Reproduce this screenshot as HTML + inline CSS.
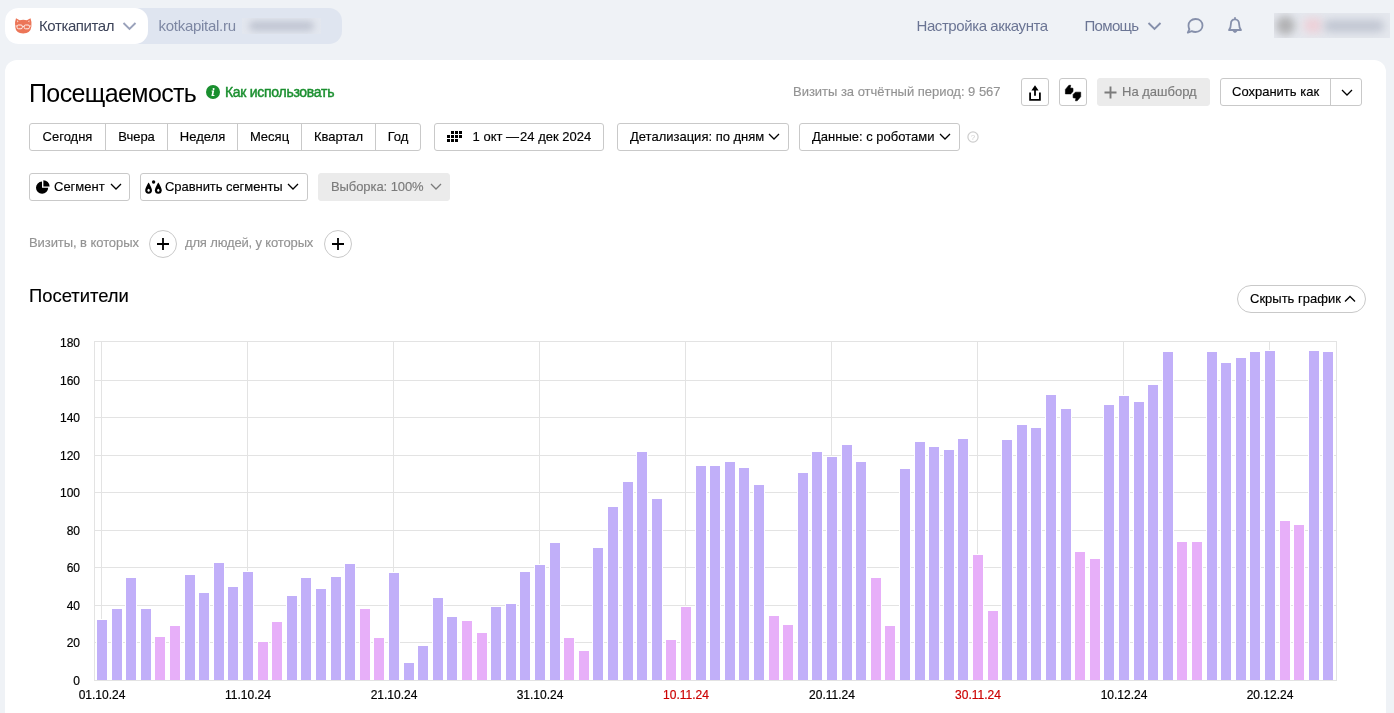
<!DOCTYPE html>
<html lang="ru">
<head>
<meta charset="utf-8">
<title>Посещаемость</title>
<style>
*{box-sizing:border-box;margin:0;padding:0}
html,body{width:1394px;height:713px;overflow:hidden}
body{background:#eff2f6;font-family:"Liberation Sans",sans-serif;font-size:13px;color:#000;position:relative}
.abs{position:absolute;white-space:nowrap}
/* header */
.crumb{position:absolute;left:5px;top:8px;width:337px;height:36px;border-radius:13px;background:#dfe5f0}
.crumb .w{position:absolute;left:0;top:0;width:143px;height:36px;border-radius:13px;background:#fff}
.hd{position:absolute;white-space:nowrap;font-size:15px;color:#6b7594;line-height:18px}
.blur{position:absolute;filter:blur(3px)}
/* panel */
.panel{position:absolute;left:5px;top:60px;width:1381px;height:660px;background:#fff;border-radius:12px 12px 0 0}
h1{position:absolute;left:29px;top:77px;font-weight:400;font-size:25px;line-height:32px;white-space:nowrap;letter-spacing:-0.62px}
.btn{position:absolute;height:28px;border:1px solid #c9c9c9;border-radius:3px;background:#fff;font-size:13px;line-height:26px;white-space:nowrap;color:#000}
.btn.gray{background:#ebebeb;border-color:#ebebeb;color:#7b7b7b}
.grp{position:absolute;left:29px;top:123px;height:28px;width:392px;border:1px solid #c9c9c9;border-radius:3px;background:#fff}
.grp span{-webkit-text-stroke:0.15px currentColor;position:absolute;top:0;height:26px;line-height:26px;text-align:center;font-size:13px;border-left:1px solid #c9c9c9}
.grp span:first-child{border-left:0}
.t{position:absolute;white-space:nowrap;-webkit-text-stroke:0.15px currentColor}
.gray{color:#939393}
.circ{position:absolute;width:28px;height:28px;border:1px solid #c9c9c9;border-radius:50%;background:#fff}
.yl{-webkit-text-stroke:0.2px #000;position:absolute;left:30px;width:50px;text-align:right;font-size:12px;line-height:14px;color:#000}
.xl{-webkit-text-stroke:0.2px currentColor;position:absolute;top:688px;width:80px;text-align:center;font-size:12px;line-height:14px;color:#000}
.xl.red{color:#cc0000}
svg.chart{position:absolute;left:0;top:0}
svg.ic{position:absolute;overflow:visible}
</style>
</head>
<body>
<div id="root" style="position:absolute;left:0;top:0;width:1394px;height:713px;will-change:transform">
<!-- HEADER -->
<div class="crumb"><div class="w"></div></div>
<svg class="ic" style="left:14.8px;top:18.4px" width="17" height="16" viewBox="0 0 17 16">
  <path d="M1 0.3 L4.6 2.3 Q8.2 1.2 11.9 2.3 L15.5 0.3 Q17 4 16.4 8.6 Q15.6 15.5 8.2 15.5 Q0.8 15.5 0.1 8.6 Q-0.5 4 1 0.3Z" fill="#ec7557"/>
  <path d="M2 2.2 L3.6 3.2 L2.2 4.6Z M14.5 2.2 L12.9 3.2 L14.3 4.6Z" fill="#f9d5cb"/>
  <rect x="2.1" y="7" width="5.2" height="3.8" rx="1.3" fill="none" stroke="#fdeee9" stroke-width="1"/>
  <rect x="9.2" y="7" width="5.2" height="3.8" rx="1.3" fill="none" stroke="#fdeee9" stroke-width="1"/>
  <path d="M7.3 8.4 H9.2 M0.4 8 H2.1 M14.4 8 H16.1" stroke="#fdeee9" stroke-width="0.9"/>
</svg>
<div class="hd" style="left:39px;top:17px;color:#3b4258;letter-spacing:-0.4px">Коткапитал</div>
<svg class="ic" style="left:122px;top:21px" width="15" height="10" viewBox="0 0 15 10"><path d="M1.5 2 L7.5 8 L13.5 2" fill="none" stroke="#9aa2bb" stroke-width="1.9"/></svg>
<div class="hd" style="left:158.5px;top:17px;color:#7d87a3;letter-spacing:-0.28px">kotkapital.ru</div>
<div class="abs" style="left:242px;top:18px;width:79px;height:16px;background:#e3e7ef;overflow:hidden"><div class="blur" style="left:7px;top:3px;width:65px;height:10px;background:#c0c5d2;border-radius:5px;filter:blur(3.5px)"></div></div>

<div class="hd" style="left:916.5px;top:17px;letter-spacing:-0.42px">Настройка аккаунта</div>
<div class="hd" style="left:1084.5px;top:17px;letter-spacing:-0.67px">Помощь</div>
<svg class="ic" style="left:1147px;top:21px" width="15" height="10" viewBox="0 0 15 10"><path d="M1.5 2 L7.5 8 L13.5 2" fill="none" stroke="#8690ab" stroke-width="1.9"/></svg>
<svg class="ic" style="left:1185px;top:16px" width="20" height="20" viewBox="0 0 20 20"><path d="M10.5 3 C14.8 3 17.5 5.8 17.5 9.5 C17.5 13.2 14.6 16 10.5 16 C9 16 7.8 15.7 6.7 15.1 L2.8 16.6 L4.4 13.2 C3.8 12.1 3.5 10.9 3.5 9.5 C3.5 5.8 6.4 3 10.5 3Z" fill="none" stroke="#8690ab" stroke-width="1.8" stroke-linejoin="round"/></svg>
<svg class="ic" style="left:1226px;top:16px" width="18" height="20" viewBox="0 0 18 20"><path d="M9 3.4 C6.2 3.4 4.9 5.6 4.9 8 C4.9 10.8 4.2 12.4 3 14 L15 14 C13.8 12.4 13.1 10.8 13.1 8 C13.1 5.6 11.8 3.4 9 3.4Z M9 1.8 V3.4 M7.2 14.4 Q9 17.6 10.8 14.4" fill="none" stroke="#8690ab" stroke-width="1.8" stroke-linejoin="round" stroke-linecap="round"/></svg>
<div class="abs" style="left:1274px;top:13px;width:116px;height:25px;background:#e5e8ee;overflow:hidden">
  <div class="blur" style="left:2px;top:3px;width:19px;height:19px;background:#b0b0b2;border-radius:50%;filter:blur(4px)"></div>
  <div class="blur" style="left:30px;top:5px;width:18px;height:15px;background:#edd0d8;border-radius:5px;filter:blur(4px)"></div>
  <div class="blur" style="left:50px;top:7px;width:60px;height:12px;background:#c0c5d1;border-radius:5px;filter:blur(4px)"></div>
</div>

<!-- PANEL -->
<div class="panel"></div>
<h1>Посещаемость</h1>
<svg class="ic" style="left:206px;top:85px" width="14" height="14" viewBox="0 0 14 14"><circle cx="7" cy="7" r="7" fill="#1a8f2f"/><path d="M7.6 3 a1 1 0 1 1 -0.01 0Z M5.6 5.6 H8.2 L7.3 10 H8.4 V10.9 H5.4 L6.3 6.5 H5.6Z" fill="#fff"/></svg>
<div class="t" style="left:225px;top:84px;font-size:14px;line-height:16px;font-weight:400;color:#1a8f2f;-webkit-text-stroke:0.45px #1a8f2f;letter-spacing:-0.29px">Как использовать</div>

<div class="t gray" style="left:793px;top:84px;font-size:13px;line-height:16px;letter-spacing:-0.02px">Визиты за отчётный период: 9 567</div>
<div class="btn" style="left:1021px;top:78px;width:28px"></div>
<svg class="ic" style="left:1027px;top:83px" width="16" height="20" viewBox="0 0 16 20"><path d="M8 2.2 L11.6 7.6 H8.9 V12.8 H7.1 V7.6 H4.4Z" fill="#000"/><path d="M3.1 9.4 V16.8 H12.9 V9.4" fill="none" stroke="#000" stroke-width="1.8"/></svg>
<div class="btn" style="left:1059px;top:78px;width:28px"></div>
<svg class="ic" style="left:1065px;top:85px" width="17" height="17" viewBox="0 0 17 17"><path d="M0.40 8.90 L0.40 4.40 L3.90 0.30 L5.70 0.30 L5.10 2.90 L8.00 3.30 L8.00 6.60 L5.70 8.90Z" fill="#000" stroke="#000" stroke-width="0.6" stroke-linejoin="round"/><path d="M15.70 7.16 L15.70 11.66 L12.20 15.76 L10.40 15.76 L11.00 13.16 L8.10 12.76 L8.10 9.46 L10.40 7.16Z" fill="#000" stroke="#000" stroke-width="0.6" stroke-linejoin="round"/></svg>
<div class="btn gray" style="left:1097px;top:78px;width:113px"></div>
<svg class="ic" style="left:1104px;top:86px" width="13" height="13" viewBox="0 0 13 13"><path d="M6.5 0.5 V12.5 M0.5 6.5 H12.5" stroke="#7b7b7b" stroke-width="1.9"/></svg>
<div class="t" style="left:1122px;top:84px;font-size:13px;line-height:16px;color:#7b7b7b">На дашборд</div>
<div class="btn" style="left:1220px;top:78px;width:142px"></div>
<div class="abs" style="left:1330px;top:79px;width:1px;height:26px;background:#c9c9c9"></div>
<div class="t" style="left:1232px;top:84px;font-size:13px;line-height:16px">Сохранить как</div>
<svg class="ic" style="left:1341.2px;top:89px" width="12" height="8" viewBox="0 0 12 8"><path d="M1 1 L6 6 L11 1" fill="none" stroke="#000" stroke-width="1.3"/></svg>

<!-- period row -->
<div class="grp">
  <span style="left:0;width:75px">Сегодня</span>
  <span style="left:75px;width:62px">Вчера</span>
  <span style="left:137px;width:70px">Неделя</span>
  <span style="left:207px;width:64px">Месяц</span>
  <span style="left:271px;width:74px">Квартал</span>
  <span style="left:345px;width:45px">Год</span>
</div>
<div class="btn" style="left:434px;top:123px;width:170px"></div>
<svg class="ic" style="left:447px;top:131px" width="15" height="11" viewBox="0 0 15 11" shape-rendering="crispEdges">
  <g fill="#000">
    <rect x="4" y="0" width="3" height="3"/><rect x="8" y="0" width="3" height="3"/><rect x="12" y="0" width="3" height="3"/>
    <rect x="0" y="4" width="3" height="3"/><rect x="4" y="4" width="3" height="3"/><rect x="8" y="4" width="3" height="3"/><rect x="12" y="4" width="3" height="3"/>
    <rect x="0" y="8" width="3" height="3"/><rect x="4" y="8" width="3" height="3"/><rect x="8" y="8" width="3" height="3"/>
  </g>
</svg>
<div class="t" style="left:472.6px;top:129px;font-size:13px;line-height:16px">1 окт —<span style="margin-left:1px">24</span> дек 2024</div>
<div class="btn" style="left:617px;top:123px;width:172px"></div>
<div class="t" style="left:630px;top:129px;font-size:13px;line-height:16px">Детализация: по дням</div>
<svg class="ic" style="left:767.6px;top:133.3px" width="12" height="8" viewBox="0 0 12 8"><path d="M1 1 L6 6 L11 1" fill="none" stroke="#000" stroke-width="1.3"/></svg>
<div class="btn" style="left:799px;top:123px;width:161px"></div>
<div class="t" style="left:812px;top:129px;font-size:13px;line-height:16px">Данные: с роботами</div>
<svg class="ic" style="left:938.6px;top:133.3px" width="12" height="8" viewBox="0 0 12 8"><path d="M1 1 L6 6 L11 1" fill="none" stroke="#000" stroke-width="1.3"/></svg>
<svg class="ic" style="left:967px;top:131px" width="12" height="12" viewBox="0 0 12 12"><circle cx="6" cy="6" r="5.1" fill="none" stroke="#cdcdcd" stroke-width="1.2"/><text x="6" y="8.8" font-size="8" text-anchor="middle" fill="#cfcfcf" font-family="Liberation Sans, sans-serif">?</text></svg>

<!-- segment row -->
<div class="btn" style="left:29px;top:173px;width:101px"></div>
<svg class="ic" style="left:36px;top:180px" width="14" height="14" viewBox="0 0 14 14"><path d="M6 1.6 A6.1 6.1 0 1 0 12.2 7.8 L6 7.8Z" fill="#000"/><path d="M7.4 0.2 A6.2 6.2 0 0 1 13.6 6.4 L7.4 6.4Z" fill="#000"/></svg>
<div class="t" style="left:54px;top:179px;font-size:13px;line-height:16px">Сегмент</div>
<svg class="ic" style="left:109.6px;top:183.3px" width="12" height="8" viewBox="0 0 12 8"><path d="M1 1 L6 6 L11 1" fill="none" stroke="#000" stroke-width="1.3"/></svg>
<div class="btn" style="left:140px;top:173px;width:168px"></div>
<svg class="ic" style="left:145px;top:179px" width="18" height="16" viewBox="0 0 18 16"><path d="M3.6 3.4 C3.6 3.4 0.2 8.6 0.2 11.2 A3.4 3.5 0 0 0 7 11.2 C7 8.6 3.6 3.4 3.6 3.4Z" fill="#000"/><ellipse cx="3.6" cy="11.2" rx="1.1" ry="1.5" fill="#fff"/><path d="M13.3 3.4 C13.3 3.4 9.9 8.6 9.9 11.2 A3.4 3.5 0 0 0 16.7 11.2 C16.7 8.6 13.3 3.4 13.3 3.4Z" fill="#000"/><ellipse cx="13.3" cy="11.2" rx="1.1" ry="1.5" fill="#fff"/><circle cx="8.6" cy="3" r="1.7" fill="#000"/></svg>
<div class="t" style="left:165px;top:179px;font-size:13px;line-height:16px;letter-spacing:-0.06px">Сравнить сегменты</div>
<svg class="ic" style="left:286.6px;top:183.3px" width="12" height="8" viewBox="0 0 12 8"><path d="M1 1 L6 6 L11 1" fill="none" stroke="#000" stroke-width="1.3"/></svg>
<div class="btn gray" style="left:318px;top:173px;width:132px"></div>
<div class="t" style="left:331px;top:179px;font-size:13px;line-height:16px;color:#7b7b7b;letter-spacing:-0.08px">Выборка: 100%</div>
<svg class="ic" style="left:429.6px;top:183.3px" width="12" height="8" viewBox="0 0 12 8"><path d="M1 1 L6 6 L11 1" fill="none" stroke="#7b7b7b" stroke-width="1.3"/></svg>

<!-- condition row -->
<div class="t gray" style="left:29px;top:235px;font-size:13px;line-height:16px;letter-spacing:-0.07px">Визиты, в которых</div>
<div class="circ" style="left:149px;top:230px"></div>
<svg class="ic" style="left:157px;top:238px" width="12" height="12" viewBox="0 0 12 12"><path d="M6 0 V12 M0 6 H12" stroke="#000" stroke-width="1.8"/></svg>
<div class="t gray" style="left:185px;top:235px;font-size:13px;line-height:16px;letter-spacing:-0.15px">для людей, у которых</div>
<div class="circ" style="left:324px;top:230px"></div>
<svg class="ic" style="left:332px;top:238px" width="12" height="12" viewBox="0 0 12 12"><path d="M6 0 V12 M0 6 H12" stroke="#000" stroke-width="1.8"/></svg>

<!-- chart header -->
<div class="t" style="left:29px;top:285px;font-size:18.4px;line-height:22px">Посетители</div>
<div class="btn" style="left:1237px;top:285px;width:129px;border-radius:14px"></div>
<div class="t" style="left:1250px;top:291px;font-size:13px;line-height:16px">Скрыть график</div>
<svg class="ic" style="left:1344.1px;top:294.7px" width="12" height="8" viewBox="0 0 12 8"><path d="M1 6.5 L6 1.5 L11 6.5" fill="none" stroke="#000" stroke-width="1.3"/></svg>

<!-- chart -->
<svg class="chart" width="1394" height="713" viewBox="0 0 1394 713" shape-rendering="crispEdges">
<rect x="94" y="680" width="1243" height="1" fill="#e3e3e3"/>
<rect x="94" y="642" width="1243" height="1" fill="#e3e3e3"/>
<rect x="94" y="605" width="1243" height="1" fill="#e3e3e3"/>
<rect x="94" y="567" width="1243" height="1" fill="#e3e3e3"/>
<rect x="94" y="530" width="1243" height="1" fill="#e3e3e3"/>
<rect x="94" y="492" width="1243" height="1" fill="#e3e3e3"/>
<rect x="94" y="455" width="1243" height="1" fill="#e3e3e3"/>
<rect x="94" y="417" width="1243" height="1" fill="#e3e3e3"/>
<rect x="94" y="380" width="1243" height="1" fill="#e3e3e3"/>
<rect x="94" y="341" width="1243" height="1" fill="#e3e3e3"/>
<rect x="94" y="341" width="1" height="340" fill="#e3e3e3"/>
<rect x="1336" y="341" width="1" height="340" fill="#e3e3e3"/>
<rect x="101" y="341" width="1" height="340" fill="#e3e3e3"/>
<rect x="247" y="341" width="1" height="340" fill="#e3e3e3"/>
<rect x="393" y="341" width="1" height="340" fill="#e3e3e3"/>
<rect x="539" y="341" width="1" height="340" fill="#e3e3e3"/>
<rect x="685" y="341" width="1" height="340" fill="#e3e3e3"/>
<rect x="831" y="341" width="1" height="340" fill="#e3e3e3"/>
<rect x="977" y="341" width="1" height="340" fill="#e3e3e3"/>
<rect x="1123" y="341" width="1" height="340" fill="#e3e3e3"/>
<rect x="1269" y="341" width="1" height="340" fill="#e3e3e3"/>
<rect x="96" y="619" width="12" height="61" fill="#fff"/>
<rect x="97" y="620" width="10" height="60" fill="#c1aff9"/>
<rect x="111" y="608" width="12" height="72" fill="#fff"/>
<rect x="112" y="609" width="10" height="71" fill="#c1aff9"/>
<rect x="125" y="577" width="12" height="103" fill="#fff"/>
<rect x="126" y="578" width="10" height="102" fill="#c1aff9"/>
<rect x="140" y="608" width="12" height="72" fill="#fff"/>
<rect x="141" y="609" width="10" height="71" fill="#c1aff9"/>
<rect x="154" y="636" width="12" height="44" fill="#fff"/>
<rect x="155" y="637" width="10" height="43" fill="#e7aff9"/>
<rect x="169" y="625" width="12" height="55" fill="#fff"/>
<rect x="170" y="626" width="10" height="54" fill="#e7aff9"/>
<rect x="184" y="574" width="12" height="106" fill="#fff"/>
<rect x="185" y="575" width="10" height="105" fill="#c1aff9"/>
<rect x="198" y="592" width="12" height="88" fill="#fff"/>
<rect x="199" y="593" width="10" height="87" fill="#c1aff9"/>
<rect x="213" y="562" width="12" height="118" fill="#fff"/>
<rect x="214" y="563" width="10" height="117" fill="#c1aff9"/>
<rect x="227" y="586" width="12" height="94" fill="#fff"/>
<rect x="228" y="587" width="10" height="93" fill="#c1aff9"/>
<rect x="242" y="571" width="12" height="109" fill="#fff"/>
<rect x="243" y="572" width="10" height="108" fill="#c1aff9"/>
<rect x="257" y="641" width="12" height="39" fill="#fff"/>
<rect x="258" y="642" width="10" height="38" fill="#e7aff9"/>
<rect x="271" y="621" width="12" height="59" fill="#fff"/>
<rect x="272" y="622" width="10" height="58" fill="#e7aff9"/>
<rect x="286" y="595" width="12" height="85" fill="#fff"/>
<rect x="287" y="596" width="10" height="84" fill="#c1aff9"/>
<rect x="300" y="577" width="12" height="103" fill="#fff"/>
<rect x="301" y="578" width="10" height="102" fill="#c1aff9"/>
<rect x="315" y="588" width="12" height="92" fill="#fff"/>
<rect x="316" y="589" width="10" height="91" fill="#c1aff9"/>
<rect x="330" y="576" width="12" height="104" fill="#fff"/>
<rect x="331" y="577" width="10" height="103" fill="#c1aff9"/>
<rect x="344" y="563" width="12" height="117" fill="#fff"/>
<rect x="345" y="564" width="10" height="116" fill="#c1aff9"/>
<rect x="359" y="608" width="12" height="72" fill="#fff"/>
<rect x="360" y="609" width="10" height="71" fill="#e7aff9"/>
<rect x="373" y="637" width="12" height="43" fill="#fff"/>
<rect x="374" y="638" width="10" height="42" fill="#e7aff9"/>
<rect x="388" y="572" width="12" height="108" fill="#fff"/>
<rect x="389" y="573" width="10" height="107" fill="#c1aff9"/>
<rect x="403" y="662" width="12" height="18" fill="#fff"/>
<rect x="404" y="663" width="10" height="17" fill="#c1aff9"/>
<rect x="417" y="645" width="12" height="35" fill="#fff"/>
<rect x="418" y="646" width="10" height="34" fill="#c1aff9"/>
<rect x="432" y="597" width="12" height="83" fill="#fff"/>
<rect x="433" y="598" width="10" height="82" fill="#c1aff9"/>
<rect x="446" y="616" width="12" height="64" fill="#fff"/>
<rect x="447" y="617" width="10" height="63" fill="#c1aff9"/>
<rect x="461" y="620" width="12" height="60" fill="#fff"/>
<rect x="462" y="621" width="10" height="59" fill="#e7aff9"/>
<rect x="476" y="632" width="12" height="48" fill="#fff"/>
<rect x="477" y="633" width="10" height="47" fill="#e7aff9"/>
<rect x="490" y="606" width="12" height="74" fill="#fff"/>
<rect x="491" y="607" width="10" height="73" fill="#c1aff9"/>
<rect x="505" y="603" width="12" height="77" fill="#fff"/>
<rect x="506" y="604" width="10" height="76" fill="#c1aff9"/>
<rect x="519" y="571" width="12" height="109" fill="#fff"/>
<rect x="520" y="572" width="10" height="108" fill="#c1aff9"/>
<rect x="534" y="564" width="12" height="116" fill="#fff"/>
<rect x="535" y="565" width="10" height="115" fill="#c1aff9"/>
<rect x="549" y="542" width="12" height="138" fill="#fff"/>
<rect x="550" y="543" width="10" height="137" fill="#c1aff9"/>
<rect x="563" y="637" width="12" height="43" fill="#fff"/>
<rect x="564" y="638" width="10" height="42" fill="#e7aff9"/>
<rect x="578" y="650" width="12" height="30" fill="#fff"/>
<rect x="579" y="651" width="10" height="29" fill="#e7aff9"/>
<rect x="592" y="547" width="12" height="133" fill="#fff"/>
<rect x="593" y="548" width="10" height="132" fill="#c1aff9"/>
<rect x="607" y="506" width="12" height="174" fill="#fff"/>
<rect x="608" y="507" width="10" height="173" fill="#c1aff9"/>
<rect x="622" y="481" width="12" height="199" fill="#fff"/>
<rect x="623" y="482" width="10" height="198" fill="#c1aff9"/>
<rect x="636" y="451" width="12" height="229" fill="#fff"/>
<rect x="637" y="452" width="10" height="228" fill="#c1aff9"/>
<rect x="651" y="498" width="12" height="182" fill="#fff"/>
<rect x="652" y="499" width="10" height="181" fill="#c1aff9"/>
<rect x="665" y="639" width="12" height="41" fill="#fff"/>
<rect x="666" y="640" width="10" height="40" fill="#e7aff9"/>
<rect x="680" y="606" width="12" height="74" fill="#fff"/>
<rect x="681" y="607" width="10" height="73" fill="#e7aff9"/>
<rect x="695" y="465" width="12" height="215" fill="#fff"/>
<rect x="696" y="466" width="10" height="214" fill="#c1aff9"/>
<rect x="709" y="465" width="12" height="215" fill="#fff"/>
<rect x="710" y="466" width="10" height="214" fill="#c1aff9"/>
<rect x="724" y="461" width="12" height="219" fill="#fff"/>
<rect x="725" y="462" width="10" height="218" fill="#c1aff9"/>
<rect x="738" y="467" width="12" height="213" fill="#fff"/>
<rect x="739" y="468" width="10" height="212" fill="#c1aff9"/>
<rect x="753" y="484" width="12" height="196" fill="#fff"/>
<rect x="754" y="485" width="10" height="195" fill="#c1aff9"/>
<rect x="768" y="615" width="12" height="65" fill="#fff"/>
<rect x="769" y="616" width="10" height="64" fill="#e7aff9"/>
<rect x="782" y="624" width="12" height="56" fill="#fff"/>
<rect x="783" y="625" width="10" height="55" fill="#e7aff9"/>
<rect x="797" y="472" width="12" height="208" fill="#fff"/>
<rect x="798" y="473" width="10" height="207" fill="#c1aff9"/>
<rect x="811" y="451" width="12" height="229" fill="#fff"/>
<rect x="812" y="452" width="10" height="228" fill="#c1aff9"/>
<rect x="826" y="456" width="12" height="224" fill="#fff"/>
<rect x="827" y="457" width="10" height="223" fill="#c1aff9"/>
<rect x="841" y="444" width="12" height="236" fill="#fff"/>
<rect x="842" y="445" width="10" height="235" fill="#c1aff9"/>
<rect x="855" y="461" width="12" height="219" fill="#fff"/>
<rect x="856" y="462" width="10" height="218" fill="#c1aff9"/>
<rect x="870" y="577" width="12" height="103" fill="#fff"/>
<rect x="871" y="578" width="10" height="102" fill="#e7aff9"/>
<rect x="884" y="625" width="12" height="55" fill="#fff"/>
<rect x="885" y="626" width="10" height="54" fill="#e7aff9"/>
<rect x="899" y="468" width="12" height="212" fill="#fff"/>
<rect x="900" y="469" width="10" height="211" fill="#c1aff9"/>
<rect x="914" y="441" width="12" height="239" fill="#fff"/>
<rect x="915" y="442" width="10" height="238" fill="#c1aff9"/>
<rect x="928" y="446" width="12" height="234" fill="#fff"/>
<rect x="929" y="447" width="10" height="233" fill="#c1aff9"/>
<rect x="943" y="449" width="12" height="231" fill="#fff"/>
<rect x="944" y="450" width="10" height="230" fill="#c1aff9"/>
<rect x="957" y="438" width="12" height="242" fill="#fff"/>
<rect x="958" y="439" width="10" height="241" fill="#c1aff9"/>
<rect x="972" y="554" width="12" height="126" fill="#fff"/>
<rect x="973" y="555" width="10" height="125" fill="#e7aff9"/>
<rect x="987" y="610" width="12" height="70" fill="#fff"/>
<rect x="988" y="611" width="10" height="69" fill="#e7aff9"/>
<rect x="1001" y="439" width="12" height="241" fill="#fff"/>
<rect x="1002" y="440" width="10" height="240" fill="#c1aff9"/>
<rect x="1016" y="424" width="12" height="256" fill="#fff"/>
<rect x="1017" y="425" width="10" height="255" fill="#c1aff9"/>
<rect x="1030" y="427" width="12" height="253" fill="#fff"/>
<rect x="1031" y="428" width="10" height="252" fill="#c1aff9"/>
<rect x="1045" y="394" width="12" height="286" fill="#fff"/>
<rect x="1046" y="395" width="10" height="285" fill="#c1aff9"/>
<rect x="1060" y="408" width="12" height="272" fill="#fff"/>
<rect x="1061" y="409" width="10" height="271" fill="#c1aff9"/>
<rect x="1074" y="551" width="12" height="129" fill="#fff"/>
<rect x="1075" y="552" width="10" height="128" fill="#e7aff9"/>
<rect x="1089" y="558" width="12" height="122" fill="#fff"/>
<rect x="1090" y="559" width="10" height="121" fill="#e7aff9"/>
<rect x="1103" y="404" width="12" height="276" fill="#fff"/>
<rect x="1104" y="405" width="10" height="275" fill="#c1aff9"/>
<rect x="1118" y="395" width="12" height="285" fill="#fff"/>
<rect x="1119" y="396" width="10" height="284" fill="#c1aff9"/>
<rect x="1133" y="401" width="12" height="279" fill="#fff"/>
<rect x="1134" y="402" width="10" height="278" fill="#c1aff9"/>
<rect x="1147" y="384" width="12" height="296" fill="#fff"/>
<rect x="1148" y="385" width="10" height="295" fill="#c1aff9"/>
<rect x="1162" y="351" width="12" height="329" fill="#fff"/>
<rect x="1163" y="352" width="10" height="328" fill="#c1aff9"/>
<rect x="1176" y="541" width="12" height="139" fill="#fff"/>
<rect x="1177" y="542" width="10" height="138" fill="#e7aff9"/>
<rect x="1191" y="541" width="12" height="139" fill="#fff"/>
<rect x="1192" y="542" width="10" height="138" fill="#e7aff9"/>
<rect x="1206" y="351" width="12" height="329" fill="#fff"/>
<rect x="1207" y="352" width="10" height="328" fill="#c1aff9"/>
<rect x="1220" y="362" width="12" height="318" fill="#fff"/>
<rect x="1221" y="363" width="10" height="317" fill="#c1aff9"/>
<rect x="1235" y="357" width="12" height="323" fill="#fff"/>
<rect x="1236" y="358" width="10" height="322" fill="#c1aff9"/>
<rect x="1249" y="351" width="12" height="329" fill="#fff"/>
<rect x="1250" y="352" width="10" height="328" fill="#c1aff9"/>
<rect x="1264" y="350" width="12" height="330" fill="#fff"/>
<rect x="1265" y="351" width="10" height="329" fill="#c1aff9"/>
<rect x="1279" y="520" width="12" height="160" fill="#fff"/>
<rect x="1280" y="521" width="10" height="159" fill="#e7aff9"/>
<rect x="1293" y="524" width="12" height="156" fill="#fff"/>
<rect x="1294" y="525" width="10" height="155" fill="#e7aff9"/>
<rect x="1308" y="350" width="12" height="330" fill="#fff"/>
<rect x="1309" y="351" width="10" height="329" fill="#c1aff9"/>
<rect x="1322" y="351" width="12" height="329" fill="#fff"/>
<rect x="1323" y="352" width="10" height="328" fill="#c1aff9"/>
</svg>
<div class="yl" style="top:673.5px">0</div>
<div class="yl" style="top:636.0px">20</div>
<div class="yl" style="top:598.5px">40</div>
<div class="yl" style="top:561.0px">60</div>
<div class="yl" style="top:523.5px">80</div>
<div class="yl" style="top:486.0px">100</div>
<div class="yl" style="top:448.5px">120</div>
<div class="yl" style="top:411.0px">140</div>
<div class="yl" style="top:373.5px">160</div>
<div class="yl" style="top:336.0px">180</div>

<div class="xl" style="left:62.0px">01.10.24</div>
<div class="xl" style="left:208.0px">11.10.24</div>
<div class="xl" style="left:354.0px">21.10.24</div>
<div class="xl" style="left:500.0px">31.10.24</div>
<div class="xl red" style="left:646.0px">10.11.24</div>
<div class="xl" style="left:792.0px">20.11.24</div>
<div class="xl red" style="left:938.0px">30.11.24</div>
<div class="xl" style="left:1084.0px">10.12.24</div>
<div class="xl" style="left:1230.0px">20.12.24</div>

</div>
</body>
</html>
